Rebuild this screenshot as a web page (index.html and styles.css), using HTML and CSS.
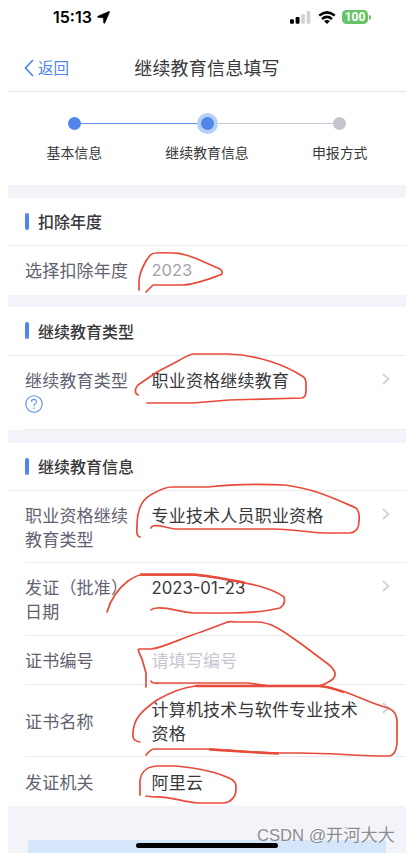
FILE: index.html
```html
<!DOCTYPE html>
<html lang="zh-CN">
<head>
<meta charset="utf-8">
<title>继续教育信息填写</title>
<link rel="stylesheet" href="styles.css">
</head>
<body>
<div class="phone">
  <header class="status">
    <div class="clock">15:13<svg width="13" height="13" viewBox="0 0 13 13"><path d="M11.800.500.900 5.200Q0 5.900 1.100 6.400L6.300 6.800 6.700 12Q7.200 13 7.800 12L12.500 1.200Q12.700.200 11.800.500Z" stroke="#000" stroke-width=".6"/></svg></div>
    <div class="signals">
      <svg width="21" height="13" viewBox="0 0 21 13"><rect x="0" y="8.200" width="3.900" height="4.500" rx="1"/><rect x="5.600" y="6" width="3.900" height="6.700" rx="1"/><rect x="11.200" y="3.200" width="3.700" height="9.500" rx="1" fill="#d2d2d2"/><rect x="16.700" y="0" width="3.700" height="12.700" rx="1" fill="#d2d2d2"/></svg>
      <svg class="wifi" width="18" height="13" viewBox="0 0 18 13"><path d="M1.200 4.600Q9-1.800 16.800 4.600M4 7.900Q9 3.900 14 7.900" fill="none" stroke="#000" stroke-width="2.500"/><path d="M9 13 6 10Q9 7.800 12 10Z"/></svg>
      <span class="battery">100</span><i class="cap"></i>
    </div>
  </header>
  <nav class="nav">
    <a class="back"><svg width="10" height="18" viewBox="0 0 10 18"><path d="M9 1 1.500 9 9 17"/></svg><span>返回</span></a>
    <h1>继续教育信息填写</h1>
  </nav>
  <ol class="steps">
    <li class="done"><i></i><span>基本信息</span></li>
    <li class="current"><i></i><span>继续教育信息</span></li>
    <li><i></i><span>申报方式</span></li>
  </ol>
  <section>
    <h2>扣除年度</h2>
    <div class="row year"><label>选择扣除年度</label><p class="muted">2023</p></div>
  </section>
  <section class="type">
    <h2>继续教育类型</h2>
    <div class="row tall help-row"><label>继续教育类型<svg class="help" width="18" height="18" viewBox="0 0 18 18"><circle cx="9" cy="9" r="8.200"/><path d="M6.400 7.100C6.400 3.500 11.500 3.600 11.500 6.800 11.500 8.600 9 8.700 9 11"/><path d="M9 12.600v1.300"/></svg></label><p>职业资格继续教育</p><svg class="arrow" width="8" height="12" viewBox="0 0 8 12"><path d="m1 1 5.500 5L1 11"/></svg></div>
  </section>
  <section class="info">
    <h2>继续教育信息</h2>
    <div class="row tall"><label>职业资格继续教育类型</label><p>专业技术人员职业资格</p><svg class="arrow" width="8" height="12" viewBox="0 0 8 12"><path d="m1 1 5.500 5L1 11"/></svg></div>
    <div class="row tall date"><label>发证（批准）日期</label><p>2023-01-23</p><svg class="arrow" width="8" height="12" viewBox="0 0 8 12"><path d="m1 1 5.500 5L1 11"/></svg></div>
    <div class="row"><label>证书编号</label><p class="placeholder">请填写编号</p></div>
    <div class="row tall name"><label>证书名称</label><p>计算机技术与软件专业技术资格</p><svg class="arrow" width="8" height="12" viewBox="0 0 8 12"><path d="m1 1 5.500 5L1 11"/></svg></div>
    <div class="row last"><label>发证机关</label><p>阿里云</p></div>
  </section>
  <footer><div class="submit"></div></footer>
</div>
<div class="home"></div>
<div class="watermark">CSDN <span>@开河大大</span></div>
<svg class="marks" width="409" height="853" viewBox="0 0 409 853">
  <path d="M139 290V282C139 274 142 268 146 261C150 255 151 253 156 253C179 252 183 254 195 258L220 269C223 271 223 274 220 275C206 280 194 285 182 285H153L146 292"/>
  <path d="M138 395C134 393 135 388 138 385L157 372 178 361Q190 354 193 354H228C258 355 285 365 302 376Q306 378 306 383V391Q306 397 302 398L229 400 193 403H147"/>
  <path d="M140 537Q136 536 137 528V523C138 505 144 498 154 493Q165 487 172 487H208C235 484 260 484 285 485C315 489 333 498 356 508Q360 512 359 521Q359 532 350 533H325C303 532 290 529 274 529H175C166 528 158 524 153 526Q151 527 151 528"/>
  <path d="M107 612C111 598 119 588 128 581Q137 575 141 575H193C221 577 240 582 259 586Q276 591 284 597Q286 604 280 608C264 612 250 613 232 613H194C178 612 169 607 157 608Q153 608 151 610"/>
  <path d="M141 574.500H193Q204 575 244 582.500" class="thick"/>
  <path d="M146 687V673L142 659Q137 649 139 649H151C163 648 179 639 201 632L225 623Q229 621 235 622H257C273 622 287 634 300 643L324 661Q340 672 333 679Q325 685 318 686"/>
  <path d="M151 681C152 684 156 683 160 683H248L270 686H318"/>
  <path d="M140 742Q132 741 133 734C133 718 143 710 157 700C171 692 185 687 196 686H318C345 688 364 702 388 708Q398 712 397 724V740Q397 756 388 756C358 756 330 753 300 753H276C247 753 228 749 206 749H154Q151 749 146 755"/>
  <path d="M196 686H318Q327 686 343 692M210 749.500Q245 752 278 753.500" class="thick"/>
  <path d="M140 795V786C139 773 146 767 156 766H176C196 768 214 771 229 778Q237 781 236 789C236 797 231 802 224 803H198C182 802 170 796 154 797L146 796"/>
</svg>
</body>
</html>
```
FILE: styles.css
```css
* { box-sizing: border-box; }
body { margin: 0; background: #fff; overflow: hidden; font: 17px/23.6px "Noto Sans CJK SC", sans-serif; color: #38383b; }
.phone { width: 398px; height: 853px; margin-left: 8px; background: #f3f4f9; display: flex; flex-direction: column; }
h1, h2, p, ol { margin: 0; padding: 0; }
.status { height: 44px; flex: none; background: #fff; display: flex; justify-content: space-between; padding: 6px 35px 0 45px; color: #000; }
.clock { font: 600 16px/23px Inter, sans-serif; display: flex; align-items: center; height: 23px; gap: 5px; }
.signals { display: flex; align-items: center; height: 23px; padding-bottom: 1px; }
.wifi { margin: 0 6px 0 7px; }
.battery { width: 26px; height: 14px; border-radius: 4.5px; background: #65c466; color: #fff; font: 700 12px/14px Roboto, sans-serif; text-align: center; }
.cap { width: 2px; height: 5px; margin-left: 1px; border-radius: 0 2px 2px 0; background: #65c466; }
.nav { height: 48px; flex: none; display: grid; grid-template-columns: 110px 1fr 110px; align-items: center; background: #fff; border-bottom: 1.5px solid #e4e4e5; }
.nav h1 { font-size: 18px; font-weight: 400; letter-spacing: .2px; text-align: center; white-space: nowrap; line-height: 26px; padding-bottom: 2px; }
.back { color: #5085ec; font-size: 15.5px; display: flex; align-items: center; gap: 4px; padding-left: 16px; }
.back span { padding-top: 1px; }
.back path { fill: none; stroke: #5085ec; stroke-width: 1.7; }
.steps { height: 93px; flex: none; background: #fff; display: grid; grid-template-columns: repeat(3, 132.7px); list-style: none; padding-top: 21px; }
.steps li { display: grid; grid-template-columns: 1fr 21px 1fr; grid-template-rows: 21px auto; align-items: center; }
.steps i { grid-column: 2; grid-row: 1; justify-self: center; width: 13px; height: 13px; border-radius: 50%; background: #c5c5d0; }
.steps .done i { background: #5085ec; }
.steps .current i { width: 21px; height: 21px; border: 4px solid #b6cff5; background: #5085ec; }
.steps li::before, .steps li::after { content: ""; height: 1px; grid-row: 1; background: #c9c9d8; }
.steps li::before { grid-column: 1; margin-right: -4px; }
.steps li::after { grid-column: 3; margin-left: -4px; }
.steps li:first-child::before, .steps li:last-child::after { visibility: hidden; }
.steps li.done::after, .steps li.current::before { background: #6190ed; }
.steps li.current::before { margin-right: 0; }
.steps li.current::after { margin-left: 0; }
.steps span { grid-column: 1 / 4; grid-row: 2; text-align: center; font-size: 13.9px; line-height: 20px; align-self: start; margin-top: 8px; }
section { flex: none; background: #fff; margin-top: 13px; }
section.type { margin-top: 12px; }
h2 { height: 48px; border-bottom: 1px solid #ececef; font-size: 16px; font-weight: 500; line-height: 24px; padding: 0 17px 1px; display: flex; align-items: center; gap: 9px; }
h2::before { content: ""; width: 4px; height: 17px; border-radius: 2px; background: #5085ec; }
.type h2 { height: 49px; }
.row { min-height: 49px; margin-left: 17px; padding: 0 17px 0 0; display: grid; grid-template-columns: 104px 208px 1fr; column-gap: 22.5px; align-items: center; letter-spacing: .2px; }
.row label { color: #626270; }
.row .muted { color: #a2a2aa; font: 16.5px Inter, sans-serif; letter-spacing: 0; }
.row .placeholder { color: #c6c6d0; }
.year { padding-bottom: 1px; }
.tall { height: 73px; padding-top: 12px; align-items: start; }
.info .row:not(.last) { border-bottom: 1px solid #ececef; }
.info .row:nth-child(2) { height: 72px; }
.help-row { height: 74px; border-bottom: 1px solid #ebebef; }
.help { display: block; margin-top: 3px; fill: none; stroke: #5d8eed; stroke-width: 1.1; }
.arrow { justify-self: end; margin-top: 5px; fill: none; stroke: #d2d2d8; stroke-width: 1.8; }
.date p { font: 16.7px/24px Inter, sans-serif; letter-spacing: 0; padding-top: 1px; }
.name { height: 72px; }
.name label { align-self: center; margin-top: -11px; }
footer { padding: 34px 20px 0; flex: 1; }
.submit { height: 13px; background: #d5e6fa; border-radius: 3px 3px 0 0; }
.home { position: absolute; left: 136px; top: 843px; width: 142px; height: 5px; border-radius: 3px; background: #000; }
.watermark { position: absolute; left: 257px; top: 823px; font: 16.6px/24px "Liberation Sans", "Noto Sans CJK SC", sans-serif; color: #8b8c91; text-shadow: -1px -1px 0 #ffffffb0; white-space: nowrap; }
.watermark span { font-size: 17.2px; }
.marks { position: absolute; left: 0; top: 0; fill: none; stroke: #e84b3a; stroke-width: 1.7; stroke-linecap: round; stroke-linejoin: round; }
.thick { stroke-width: 2.4; }
```
